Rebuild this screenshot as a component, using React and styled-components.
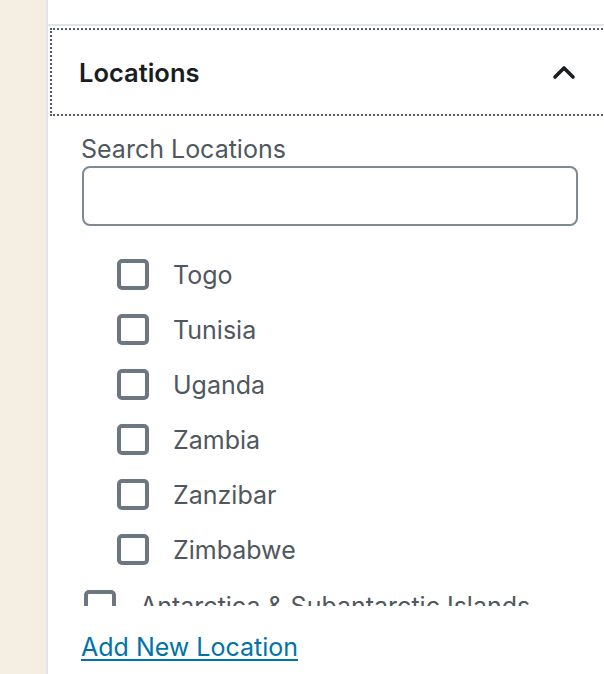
import React from "react";
import styled, { createGlobalStyle } from "styled-components";

const GlobalStyle = createGlobalStyle`
  html, body { margin: 0; padding: 0; background: #fff; }
  body { font-family: Inter, "Noto Sans", "Liberation Sans", sans-serif; }
  #root { height: 674px; }
`;

const Page = styled.div`
  display: flex;
  height: 674px;
  overflow: hidden;
`;

const Gutter = styled.div`
  width: 46px;
  flex-shrink: 0;
  background: #f5eee2;
  border-right: 2px solid #e2e4e7;
`;

const Sidebar = styled.div`
  width: 572px;
  flex-shrink: 0;
  display: flex;
  flex-direction: column;
  background: #fff;
`;

const TopBar = styled.div`
  height: 24px;
  border-bottom: 2px solid #e2e4e7;
`;

const HeaderWrap = styled.div`
  padding: 2px;
`;

const PanelToggle = styled.button`
  display: flex;
  align-items: center;
  justify-content: space-between;
  width: 100%;
  height: 88px;
  box-sizing: border-box;
  margin: 0;
  padding: 0 40px 0 27px;
  background: #fff;
  border: 2px dotted #555d66;
  font-family: Inter, "Noto Sans", sans-serif;
  font-size: 25.5px;
  font-weight: 600;
  color: #191e23;
  cursor: pointer;
  text-align: left;
`;

const PanelBody = styled.div`
  padding: 16px 0 0 33px;
  display: flex;
  flex-direction: column;
`;

const FieldLabel = styled.label`
  font-size: 25px;
  line-height: 30px;
  color: #50575e;
  margin-bottom: 2px;
`;

const SearchInput = styled.input`
  width: 496px;
  height: 60px;
  box-sizing: border-box;
  border: 2px solid #7e8993;
  border-radius: 8px;
  margin: 0 0 0 1px;
  padding: 0 14px;
  font-size: 25px;
  background: #fff;
`;

const TermList = styled.div`
  margin-top: 21px;
  height: 359px;
  padding-left: 3px;
  overflow: hidden;
`;

const Children = styled.div`
  padding-left: 33px;
  margin-bottom: 1px;
`;

const TermRow = styled.label`
  display: flex;
  align-items: center;
  height: 55px;
  gap: 24px;
  font-size: 25px;
  color: #50575e;
  white-space: nowrap;
`;

const Box = styled.span`
  width: 32px;
  height: 31px;
  box-sizing: border-box;
  border: 4px solid #6c7781;
  border-radius: 5px;
  flex-shrink: 0;
  background: #fff;
`;

const AddLink = styled.a`
  margin-top: 26px;
  font-size: 25px;
  line-height: 30px;
  color: #0073aa;
  text-decoration: underline;
  text-underline-offset: 3px;
  text-decoration-thickness: 2px;
  align-self: flex-start;
`;

const Chevron = () => (
  <svg width="24" height="16" viewBox="0 0 24 16" aria-hidden="true">
    <polyline
      points="3,13 12,4 21,13"
      fill="none"
      stroke="#191e23"
      strokeWidth="3.6"
      strokeLinecap="round"
      strokeLinejoin="round"
    />
  </svg>
);

const children = ["Togo", "Tunisia", "Uganda", "Zambia", "Zanzibar", "Zimbabwe"];
const topLevel = ["Antarctica & Subantarctic Islands", "Asia", "Europe"];

export default function App() {
  return (
    <>
      <GlobalStyle />
      <Page>
        <Gutter />
        <Sidebar>
          <TopBar />
          <HeaderWrap>
            <PanelToggle>
              Locations
              <Chevron />
            </PanelToggle>
          </HeaderWrap>
          <PanelBody>
            <FieldLabel>Search Locations</FieldLabel>
            <SearchInput type="search" />
            <TermList>
              <Children>
                {children.map((c) => (
                  <TermRow key={c}>
                    <Box />
                    {c}
                  </TermRow>
                ))}
              </Children>
              {topLevel.map((c) => (
                <TermRow key={c}>
                  <Box />
                  {c}
                </TermRow>
              ))}
            </TermList>
            <AddLink href="#">Add New Location</AddLink>
          </PanelBody>
        </Sidebar>
      </Page>
    </>
  );
}
